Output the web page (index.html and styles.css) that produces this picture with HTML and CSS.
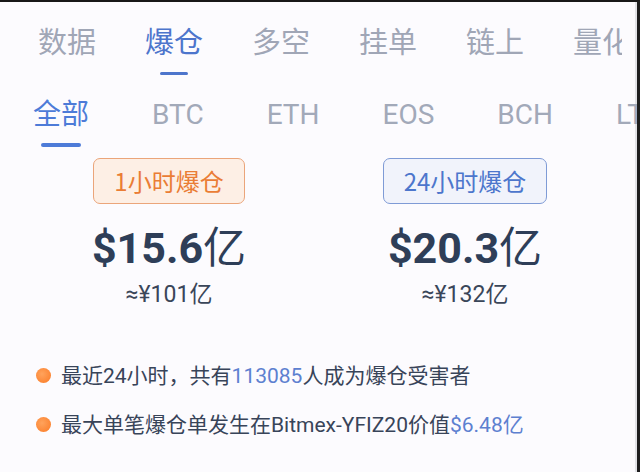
FILE: index.html
```html
<!DOCTYPE html>
<html lang="zh-CN">
<head>
    <meta charset="UTF-8">
    <meta name="viewport" content="width=device-width, initial-scale=1.0">
    <title>爆仓数据</title>
    <link rel="stylesheet" href="styles.css">
</head>
<body>
    <div class="screen">
        <nav class="main-tabs">
            <div class="tab"><span>数据</span><i class="bar"></i></div>
            <div class="tab active"><span>爆仓</span><i class="bar"></i></div>
            <div class="tab"><span>多空</span><i class="bar"></i></div>
            <div class="tab"><span>挂单</span><i class="bar"></i></div>
            <div class="tab"><span>链上</span><i class="bar"></i></div>
            <div class="tab"><span>量化</span><i class="bar"></i></div>
        </nav>

        <nav class="coin-tabs">
            <div class="coin active"><span>全部</span><i class="bar"></i></div>
            <div class="coin"><span>BTC</span><i class="bar"></i></div>
            <div class="coin"><span>ETH</span><i class="bar"></i></div>
            <div class="coin"><span>EOS</span><i class="bar"></i></div>
            <div class="coin"><span>BCH</span><i class="bar"></i></div>
            <div class="coin"><span>LTC</span><i class="bar"></i></div>
        </nav>

        <section class="summary">
            <div class="stat">
                <div class="badge hour">1小时爆仓</div>
                <div class="amount">$15.6<span class="unit">亿</span></div>
                <div class="cny">≈¥101亿</div>
            </div>
            <div class="stat">
                <div class="badge day">24小时爆仓</div>
                <div class="amount">$20.3<span class="unit">亿</span></div>
                <div class="cny">≈¥132亿</div>
            </div>
        </section>

        <ul class="facts">
            <li><i class="dot"></i>最近24小时，共有<em>113085</em>人成为爆仓受害者</li>
            <li><i class="dot"></i>最大单笔爆仓单发生在Bitmex-YFIZ20价值<em>$6.48亿</em></li>
        </ul>
    </div>
</body>
</html>
```

FILE: styles.css
```css
* {
    box-sizing: border-box;
}

body {
    margin: 0;
    background: #fcfbfe;
    font-family: Roboto, "Noto Sans CJK SC", sans-serif;
    color: #384459;
}

.screen {
    width: 640px;
    height: 472px;
    overflow: hidden;
    background: #fcfbfe;
    border-top: 2px solid #181818;
    border-right: 3px solid #1e1e1e;
    box-shadow: inset -2px 0 #e2e2e6;
}

/* top category tabs */
.main-tabs {
    display: flex;
    gap: 49px;
    width: 622px;
    overflow: hidden;
    padding: 18px 0 0 38px;
    white-space: nowrap;
}

.tab {
    display: flex;
    flex-direction: column;
    align-items: center;
    flex-shrink: 0;
}

.tab span {
    font-family: "Noto Sans CJK SC", sans-serif;
    font-size: 29px;
    line-height: 40px;
    color: #a0a6b6;
}

.tab .bar {
    width: 28px;
    height: 3px;
    margin-top: 12px;
    border-radius: 2px;
}

.tab.active span {
    color: #4d75cc;
}

.tab.active .bar {
    background: #4d75cc;
}

/* coin tabs */
.coin-tabs {
    display: flex;
    gap: 63px;
    margin-top: 22px;
    padding-left: 33px;
    white-space: nowrap;
}

.coin {
    display: flex;
    flex-direction: column;
    align-items: center;
    flex-shrink: 0;
}

.coin span {
    font-size: 28px;
    line-height: 36px;
    color: #a2a9b9;
}

.coin .bar {
    width: 40px;
    height: 4px;
    margin-top: 10px;
    border-radius: 2px;
}

.coin.active span {
    color: #4d7bd8;
}

.coin.active .bar {
    background: #4d7bd8;
}

/* liquidation summary */
.summary {
    display: grid;
    grid-template-columns: 296px 296px;
    margin-top: 11px;
    padding-left: 21px;
}

.stat {
    display: flex;
    flex-direction: column;
    align-items: center;
}

.badge {
    height: 46px;
    padding: 0 20px;
    border-radius: 7px;
    font-family: "Noto Sans CJK SC", sans-serif;
    font-size: 24px;
    line-height: 43px;
}

.badge.hour {
    border: 1.5px solid #eba57a;
    background: #fdefe5;
    color: #ea7d35;
}

.badge.day {
    border: 1.5px solid #7f9bd6;
    background: #f1f3fb;
    color: #4d76cc;
}

.amount {
    margin-top: 19px;
    font-size: 43px;
    font-weight: 700;
    line-height: 50px;
    color: #2e3e58;
}

.amount .unit {
    font-weight: 400;
}

.cny {
    margin-top: 7px;
    font-size: 23px;
    line-height: 30px;
    color: #3a4659;
}

/* notes */
.facts {
    list-style: none;
    margin: 42px 0 0;
    padding: 0 0 0 36px;
}

.facts li {
    font-size: 21px;
    line-height: 49px;
    white-space: nowrap;
}

.facts em {
    font-style: normal;
    color: #5d80d0;
}

.dot {
    display: inline-block;
    width: 15px;
    height: 15px;
    margin: 0 10px 3px 0;
    vertical-align: middle;
    border-radius: 50%;
    background: radial-gradient(circle at 40% 40%, #ffa35c, #fb7a25);
}
```
